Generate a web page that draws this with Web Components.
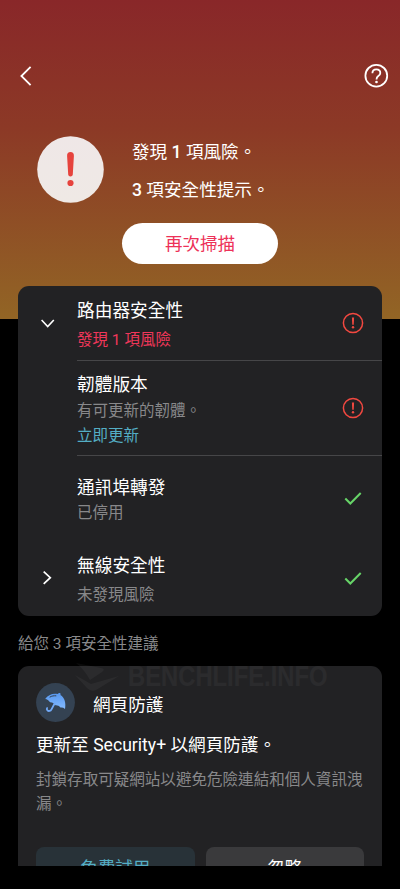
<!DOCTYPE html>
<html lang="zh-Hant">
<head>
<meta charset="utf-8">
<meta name="viewport" content="width=device-width">
<title>安全性掃描</title>
<style>
html,body{margin:0;background:#000}
body{width:400px;height:889px;overflow:hidden;font-family:Roboto,"Noto Sans CJK TC",sans-serif;color:#fff}
</style>
</head>
<body>
<security-app></security-app>
<script>
const define=(name,html,setup)=>customElements.define(name,class extends HTMLElement{
  constructor(){super();this.attachShadow({mode:'open'}).innerHTML=html}
  connectedCallback(){if(setup)setup(this,this.shadowRoot)}
});

const ICONS={
  back:[12,20,'<path d="M10.600 .8 1.400 10l9.200 9.200" stroke="#fff" stroke-width="1.800"/>'],
  help:[26,26,'<circle cx="13.300" cy="12.700" r="10.900" stroke="#fff" stroke-width="1.800"/><path d="M9.400 10.200c0-2.300 1.600-3.900 3.900-3.900s4 1.500 4 3.600c0 1.500-.9 2.400-2 3.200-1.200.9-1.800 1.600-1.800 3.300" stroke="#fff" stroke-width="1.800"/><circle cx="13.500" cy="19" r="1.350" fill="#fff"/>'],
  down:[14,9,'<path d="m.6 1 6.100 6.600L12.800 1" stroke="#fff" stroke-width="1.600"/>'],
  right:[9,14,'<path d="m.7 .6 6.600 6.100L.7 12.800" stroke="#fff" stroke-width="1.700"/>'],
  alert:[22,22,'<circle cx="11" cy="11" r="9.600" stroke="#f24840" stroke-width="1.500"/><path d="M9.900 5.500h2.200l-.35 7.200h-1.500z" fill="#f24840"/><circle cx="11" cy="15.200" r="1.200" fill="#f24840"/>'],
  check:[18,14,'<path d="m1.300 7.500 5 5L16.700 2" stroke="#67d568" stroke-width="2"/>'],
  mark:[67,67,'<circle cx="33.500" cy="33.500" r="33.300" fill="url(#g)"/><defs><linearGradient id="g" x2="0" y2="1"><stop stop-color="#efe7e7"/><stop offset="1" stop-color="#efe9e5"/></linearGradient></defs><path d="M30.100 20c-.2-2.600 1.200-4 3.400-4s3.600 1.400 3.400 4l-1.100 18.600c-.1 1.200-.8 1.800-2.300 1.800s-2.200-.6-2.300-1.800z" fill="#e6433d"/><circle cx="33.500" cy="47" r="3.100" fill="#e6433d"/>'],
  umbrella:[39,39,'<circle cx="19.500" cy="19.500" r="19.400" fill="#344252"/><defs><linearGradient id="u" x2="0" y2="1"><stop stop-color="#5696ee"/><stop offset="1" stop-color="#84bbff"/></linearGradient></defs><path d="M9.200 16c2.500-4 7.500-6.100 12.300-5.100l1.500-.9c.9-.4 1.800.3 1.600 1.200l-.2.800c4.300 2.600 5.800 8.300 4.600 13.900-1.500-1.300-3-1.700-4.500-1.300-1.400-1.800-3.100-2.600-5-2.400-1.400-2-3.300-3-5.500-2.900-1.200-2-2.900-3-4.800-3.300z" fill="url(#u)"/><path d="m18.600 20.500-3.100 5.800c-.9 1.800-2.900 2.200-4.100 1-.8-.8-.7-1.600-.3-2.200" stroke="#71a9f7" stroke-width="1.800" stroke-linecap="round"/><path d="M14 14c1.800-1.100 3.900-1.400 5.900-1.200" stroke="#344252" stroke-width="1" stroke-linecap="round"/>']
};

define('ui-icon','<style>:host{display:block;flex:none}svg,span{display:block}</style><span></span>',(h,r)=>{
  const [w,t,p]=ICONS[h.getAttribute('name')];
  r.querySelector('span').innerHTML=`<svg width="${w}" height="${t}" viewBox="0 0 ${w} ${t}" fill="none">${p}</svg>`;
});

define('nav-bar',`<style>:host{display:flex;justify-content:space-between;align-items:center;height:152px;box-sizing:border-box;padding:0 11px 0 20px}</style><ui-icon name="back"></ui-icon><ui-icon name="help"></ui-icon>`);

define('scan-hero',`<style>
:host{display:block;height:319px;background:linear-gradient(#892729,#8c3926 40%,#926525)}
.row{display:flex;gap:28px;margin:-16px 0 0 37px;align-items:flex-start}
p{margin:0;font-size:17.6px;line-height:37.500px;white-space:nowrap}
i{font-style:normal;font-weight:500}
.text{margin-top:-2px}
button{display:block;border:0;padding:0;width:156px;height:41px;border-radius:21px;background:#fff;color:#ed3158;font:17.5px/43px Roboto,"Noto Sans CJK TC",sans-serif;margin:14px 0 0 -10px}
</style><nav-bar></nav-bar><div class="row"><ui-icon name="mark"></ui-icon><div class="text"><p>發現 <i>1</i> 項風險。</p><p><i>3</i> 項安全性提示。</p><button>再次掃描</button></div></div>`);

define('check-row',`<style>
:host{display:grid;grid-template-columns:59px 1fr 59px;align-items:center;box-sizing:border-box;height:var(--h)}
.lead,.state{display:flex;justify-content:center;align-items:center}
.body{align-self:start;padding-top:var(--top)}
b{display:block;font-weight:400;font-size:17.7px;line-height:26px;margin-bottom:var(--gap,0)}
::slotted(*){display:block;font-size:15.5px;line-height:25px;white-space:nowrap}
</style><span class="lead"></span><div class="body"><b></b><slot></slot></div><span class="state"></span>`,(h,r)=>{
  r.querySelector('b').textContent=h.getAttribute('heading');
  const lead=h.getAttribute('lead');
  if(lead)r.querySelector('.lead').innerHTML=`<ui-icon name="${lead}"></ui-icon>`;
  r.querySelector('.state').innerHTML=`<ui-icon name="${h.getAttribute('state')}"></ui-icon>`;
});

define('check-card',`<style>
:host{display:block;margin:-33px 18px 0;height:330px;border-radius:11px;background:#222224;position:relative}
hr{border:0;height:1px;margin:0 0 0 59px;background:#464648}
.muted{color:#88888a}.risk{color:#f0375a}.link{color:#54aec5}
</style>
<check-row heading="路由器安全性" lead="down" state="alert" style="--h:74px;--top:12px;--gap:4px"><span class="risk">發現 1 項風險</span></check-row><hr>
<check-row heading="韌體版本" state="alert" style="--h:94px;--top:11px;--gap:1px"><span class="muted">有可更新的韌體。</span><span class="link">立即更新</span></check-row><hr>
<check-row heading="通訊埠轉發" state="check" style="--h:84px;--top:19px"><span class="muted">已停用</span></check-row>
<check-row heading="無線安全性" lead="right" state="check" style="--h:76px;--top:13px;--gap:4px"><span class="muted">未發現風險</span></check-row>`);

define('advice-card',`<style>
:host{display:block;margin:0 18px;height:200px;padding:0 18px;overflow:hidden;background:#222224;border-radius:11px 11px 0 0}
header{display:flex;align-items:center;gap:18px;padding-top:17px;font-size:17.6px}
header span{padding-top:1px}
h2{font-weight:400;font-size:17.6px;line-height:26px;margin:10px 0 11px;white-space:nowrap}
p{margin:0;color:#88888a;font-size:15.55px;line-height:23.500px}
.actions{display:grid;grid-template-columns:1fr 1fr;gap:11px;margin-top:31px}
button{height:41px;border:0;border-radius:8px;padding:0;font:17.5px/40px Roboto,"Noto Sans CJK TC",sans-serif;background:#3a3a3c;color:#fff}
.try{background:#283238;color:#54aec5}
</style>
<header><ui-icon name="umbrella"></ui-icon><span>網頁防護</span></header>
<h2>更新至 Security+ 以網頁防護。</h2>
<p>封鎖存取可疑網站以避免危險連結和個人資訊洩漏。</p>
<div class="actions"><button class="try">免費試用</button><button>忽略</button></div>`);

define('site-watermark',`<style>
:host{position:absolute;left:75px;top:660px;display:flex;gap:9px;align-items:center;opacity:.04;pointer-events:none}
span{font:bold 29px/32px "Liberation Sans",sans-serif;white-space:nowrap;display:block;width:201px;transform:scaleX(.82);transform-origin:left}
svg{display:block}
</style><svg width="44" height="29" viewBox="0 0 44 29" fill="#fff"><path d="m1 1 25 5q5 1 1 4L15 18Q9 7 1 1zM0 13l16 9 28-8-23 14q-5 2-9-2z"/></svg><span>BENCHLIFE.INFO</span>`);

define('security-app',`<style>
:host{display:block;position:relative;height:889px;background:#000;overflow:hidden}
.label{display:block;height:50px;padding-left:18px;box-sizing:border-box;font-size:15.5px;line-height:57px;color:#88888a}
</style><scan-hero></scan-hero><check-card></check-card><span class="label">給您 3 項安全性建議</span><advice-card></advice-card><site-watermark></site-watermark>`);
</script>
</body>
</html>
